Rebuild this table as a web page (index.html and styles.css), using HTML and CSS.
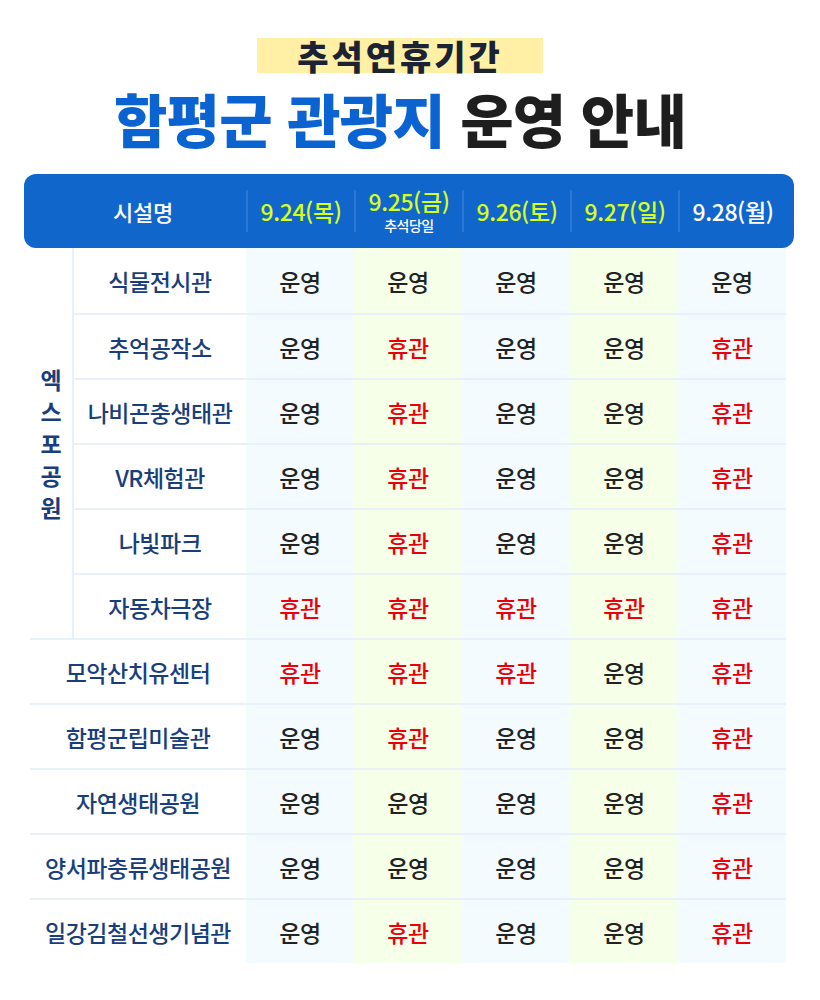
FILE: index.html
```html
<!DOCTYPE html>
<html lang="ko">
<head>
<meta charset="utf-8">
<link rel="stylesheet" href="styles.css">
</head>
<body>
<div class="page">
  <div class="titles">
    <div class="sub"><span class="sub-box">추석연휴기간</span></div>
    <h1 class="main"><span class="blue">함평군 관광지</span> 운영 안내</h1>
  </div>
  <div class="table">
    <div class="thead">
      <div class="th th-name">시설명</div>
      <div class="th"><div class="th-in"><span class="date lime">9.24(목)</span></div></div>
      <div class="th"><div class="th-in"><span class="date lime">9.25(금)</span><span class="note">추석당일</span></div></div>
      <div class="th"><div class="th-in"><span class="date lime">9.26(토)</span></div></div>
      <div class="th"><div class="th-in"><span class="date lime">9.27(일)</span></div></div>
      <div class="th"><div class="th-in"><span class="date">9.28(월)</span></div></div>
    </div>
    <div class="tbody">
      <div class="group first">엑스포공원</div>

      <div class="label first">식물전시관</div>
      <div class="c b first">운영</div><div class="c g first">운영</div><div class="c b first">운영</div><div class="c g first">운영</div><div class="c b first">운영</div>

      <div class="label">추억공작소</div>
      <div class="c b">운영</div><div class="c g off">휴관</div><div class="c b">운영</div><div class="c g">운영</div><div class="c b off">휴관</div>

      <div class="label">나비곤충생태관</div>
      <div class="c b">운영</div><div class="c g off">휴관</div><div class="c b">운영</div><div class="c g">운영</div><div class="c b off">휴관</div>

      <div class="label">VR체험관</div>
      <div class="c b">운영</div><div class="c g off">휴관</div><div class="c b">운영</div><div class="c g">운영</div><div class="c b off">휴관</div>

      <div class="label">나빛파크</div>
      <div class="c b">운영</div><div class="c g off">휴관</div><div class="c b">운영</div><div class="c g">운영</div><div class="c b off">휴관</div>

      <div class="label">자동차극장</div>
      <div class="c b off">휴관</div><div class="c g off">휴관</div><div class="c b off">휴관</div><div class="c g off">휴관</div><div class="c b off">휴관</div>

      <div class="label wide">모악산치유센터</div>
      <div class="c b off">휴관</div><div class="c g off">휴관</div><div class="c b off">휴관</div><div class="c g">운영</div><div class="c b off">휴관</div>

      <div class="label wide">함평군립미술관</div>
      <div class="c b">운영</div><div class="c g off">휴관</div><div class="c b">운영</div><div class="c g">운영</div><div class="c b off">휴관</div>

      <div class="label wide">자연생태공원</div>
      <div class="c b">운영</div><div class="c g">운영</div><div class="c b">운영</div><div class="c g">운영</div><div class="c b off">휴관</div>

      <div class="label wide">양서파충류생태공원</div>
      <div class="c b">운영</div><div class="c g">운영</div><div class="c b">운영</div><div class="c g">운영</div><div class="c b off">휴관</div>

      <div class="label wide">일강김철선생기념관</div>
      <div class="c b">운영</div><div class="c g off">휴관</div><div class="c b">운영</div><div class="c g">운영</div><div class="c b off">휴관</div>
    </div>
  </div>
</div>
</body>
</html>
```
FILE: styles.css
```css
* { box-sizing: border-box; }
html, body { margin: 0; padding: 0; background: #fff; }
body {
  font-family: "Noto Sans CJK KR", "Noto Sans", sans-serif;
  color: #222;
}
.page { width: 820px; }
.titles { width: 800px; padding-top: 38px; text-align: center; }
.sub { height: 35px; display: flex; justify-content: center; }
.sub-box {
  display: flex;
  align-items: center;
  justify-content: center;
  height: 35px;
  width: 286px;
  line-height: 1;
  background: #FFF0A6;
  color: #1B2233;
  font-size: 34px;
  font-weight: 900;
  letter-spacing: 3px;
}
.main {
  margin: 9px 0 0;
  font-size: 58px;
  line-height: 72px;
  font-weight: 900;
  letter-spacing: -0.8px;
  color: #1E1E1E;
}
.blue { color: #0A63D0; }

.table { margin-top: 20px; margin-left: 24px; width: 770px; }
.thead {
  display: grid;
  grid-template-columns: 222px repeat(5, 108px) 8px;
  height: 74px;
  background: #1166CC;
  border-radius: 12px;
  color: #fff;
}
.th { display: flex; align-items: center; }
.th-name {
  justify-content: center;
  padding-left: 16px;
  font-size: 22px;
  font-weight: 500;
  letter-spacing: -0.3px;
}
.th-in {
  width: 100%;
  height: 42px;
  border-left: 2px solid #2A78D4;
  display: flex;
  flex-direction: column;
  justify-content: center;
  align-items: center;
}
.date { font-size: 23px; font-weight: 500; letter-spacing: -0.4px; line-height: 22px; }
.lime { color: #D6FF1A; }
.note { font-size: 14px; font-weight: 500; line-height: 14px; margin-top: 6px; letter-spacing: -0.5px; }

.tbody {
  margin-left: 6px;
  display: grid;
  grid-template-columns: 44px 172px repeat(5, 108px);
  grid-auto-rows: 65px;
}
.tbody > div {
  display: flex;
  align-items: center;
  justify-content: center;
  border-top: 2px solid #E7F0FB;
}
.tbody > .first { border-top: none; }
.group {
  grid-column: 1;
  grid-row: 1 / span 6;
  border-right: 2px solid #E7F0FB;
  color: #183F7C;
  font-size: 23px;
  font-weight: 700;
  line-height: 32px;
  text-align: center;
  word-break: break-all;
  padding: 0 10px;
}
.label {
  grid-column: 2;
  color: #183F7C;
  font-size: 23px;
  font-weight: 500;
  letter-spacing: -0.5px;
}
.label.wide { grid-column: 1 / span 2; }
.c { font-size: 23px; font-weight: 500; letter-spacing: -0.5px; color: #222; }
.c.b { background: #F3FBFF; }
.c.g { background: #F6FFE8; }
.c.off { color: #E8000B; }
```
